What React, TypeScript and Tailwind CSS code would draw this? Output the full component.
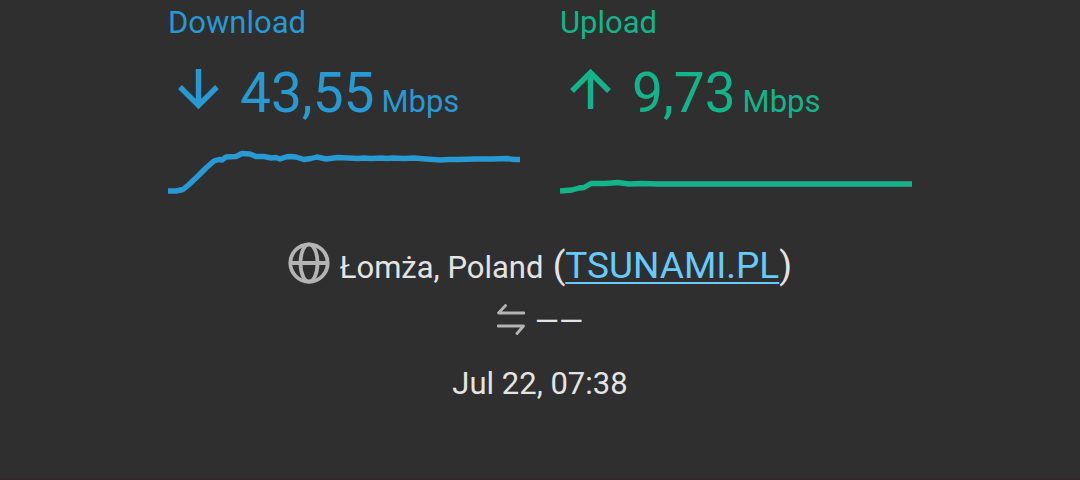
import type { ReactNode } from "react";

type SpeedPanelProps = {
  title: string;
  value: string;
  color: string;
  arrow: ReactNode;
  points: string;
};

function SpeedPanel({ title, value, color, arrow, points }: SpeedPanelProps) {
  return (
    <section className={`min-w-0 flex-1 ${color}`}>
      <h2 className="text-[31px] leading-[38px]">{title}</h2>
      <div className="mt-[18px] flex items-center pl-2">
        <svg className="mb-2 size-11 shrink-0" viewBox="0 0 44 44" fill="none" stroke="currentColor" strokeWidth="5.4" aria-hidden="true">
          {arrow}
        </svg>
        <p className="ml-5 flex items-baseline gap-[7px] whitespace-nowrap">
          <span className="text-[55px] leading-[66px]">{value}</span>
          <span className="text-[31px] leading-9">Mbps</span>
        </p>
      </div>
      <svg className="mt-5 block h-[50px] w-full" viewBox="0 0 352 50" preserveAspectRatio="none" fill="none" stroke="currentColor" strokeWidth="5.4" strokeLinejoin="round" aria-hidden="true">
        <polyline points={points} />
      </svg>
    </section>
  );
}

const DOWNLOAD_POINTS =
  "0,45 8,45 15,43.5 21,38.5 30,30 38,22 46,15 51,13.5 54,14 58,11 68,10.5 74,7.5 82,8 88,10.5 96,10.5 103,12 108,11.5 112,13 118,11 122,10.5 128,11 136,13.5 143,12.5 149,11 158,13 170,11.5 190,12.5 196,12 203,12.5 213,12 219,12.5 225,12 236,12.5 246,12 258,13 272,14 281,13.5 290,13.5 307,13 324,13 339,12.5 346,13.5 352,13.5";
const UPLOAD_POINTS =
  "0,45 12,44 19,42 24,41.5 31,37.5 45,37.5 58,36.5 69,38 82,37.5 98,38 122,38 140,38 160,38 200,38 260,38 310,38 352,38";

export default function App() {
  return (
    <main className="min-h-screen border-b-2 border-[#302a2f] bg-[#2f2f2f] px-4 pt-1 font-['Roboto',sans-serif] text-[#e4e4e4]">
      <div className="mx-auto max-w-[744px]">
        <div className="flex gap-10">
          <SpeedPanel
            title="Download"
            value="43,55"
            color="text-[#2799d3]"
            arrow={<path d="M22.5 2V38M4 20L22.5 38.5L41 20" />}
            points={DOWNLOAD_POINTS}
          />
          <SpeedPanel
            title="Upload"
            value="9,73"
            color="text-[#14b48a]"
            arrow={<path d="M22.5 42V6M4 24L22.5 5.5L41 24" />}
            points={UPLOAD_POINTS}
          />
        </div>

        <div className="mt-11 flex items-center justify-center whitespace-nowrap leading-[52px]">
          <svg className="mb-2 size-[42px] shrink-0 text-[#b4b4b4]" viewBox="0 0 42 42" fill="none" stroke="currentColor" strokeWidth="3.8" aria-hidden="true">
            <circle cx="21" cy="21" r="18.7" />
            <ellipse cx="21" cy="21" rx="8.5" ry="18.7" />
            <path d="M2 21H40" />
          </svg>
          <p className="ml-2.5 text-[37px]">
            <span className="text-[31px]">Łomża, Poland</span> (
            <a href="#provider" className="text-[#66cbff] underline decoration-2 underline-offset-4">TSUNAMI.PL</a>)
          </p>
        </div>

        <div className="mt-0.5 flex items-center justify-center gap-2.5 leading-[52px]">
          <svg className="mb-1 h-8 w-7 text-[#b4b4b4]" viewBox="0 0 28 32" fill="none" stroke="currentColor" strokeWidth="2.8" strokeLinecap="round" strokeLinejoin="round" aria-hidden="true">
            <path d="M27 9H1.5L8.5 1.5M1 22H26.5L20 29.5" />
          </svg>
          <span className="text-[31px]">——</span>
        </div>

        <p className="mt-3 text-center text-[31px] leading-[48px]">Jul 22, 07:38</p>
      </div>
    </main>
  );
}
